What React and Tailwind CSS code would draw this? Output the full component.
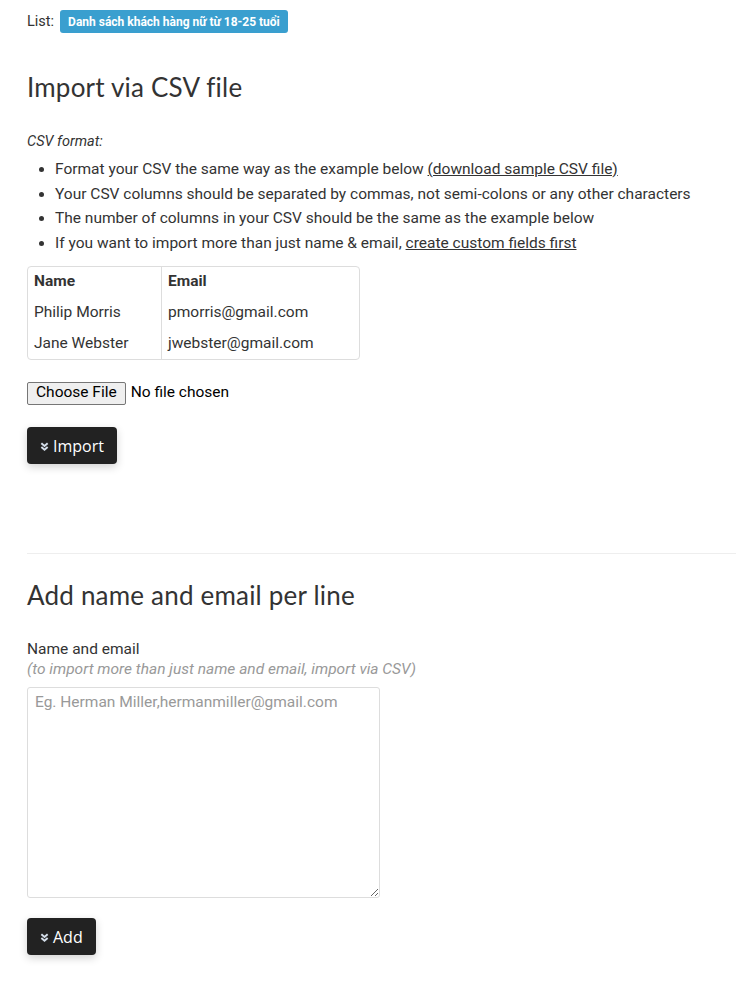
import React from 'react';

const DoubleChevron = () => (
  <svg width="9" height="9" viewBox="0 0 10 10" className="mr-[4px] mt-[1px]" fill="none" stroke="currentColor" strokeWidth="2.2">
    <path d="M1.5 1.5 L5 4.5 L8.5 1.5" />
    <path d="M1.5 5.5 L5 8.5 L8.5 5.5" />
  </svg>
);

const DarkButton = ({ children }) => (
  <button className="flex items-center h-[37px] px-[13px] bg-[#222222] text-white rounded-[4px] shadow-[0_3px_8px_rgba(0,0,0,0.18)] text-[16px] font-['Open_Sans',sans-serif]">
    <span className="text-[#d4deea]"><DoubleChevron /></span>
    {children}
  </button>
);

const heading = "text-[26px] text-[#333] font-['Lato',sans-serif] font-normal tracking-[0.2px]";

export default function App() {
  return (
    <div className="min-h-[989px] bg-white font-['Roboto',sans-serif] text-[#333] text-[15.5px] pl-[27px] overflow-hidden">
      {/* List badge */}
      <div className="flex items-center pt-[10px] h-[33px]">
        <span className="text-[14.5px] mr-[6px]">List:</span>
        <span className="bg-[#3a9fcf] text-white font-bold text-[12px] rounded-[3px] px-[8px] h-[23px] flex items-center">
          Danh sách khách hàng nữ từ 18-25 tuổi
        </span>
      </div>

      {/* CSV import */}
      <h2 className={`${heading} mt-[37px] leading-[34px]`}>Import via CSV file</h2>

      <p className="italic text-[14.5px] mt-[28px] leading-[20px]">CSV format:</p>
      <ul className="list-disc pl-[28px] mt-[5px] leading-[24.5px] marker:text-[#333]">
        <li>Format your CSV the same way as the example below <a className="underline">(download sample CSV file)</a></li>
        <li>Your CSV columns should be separated by commas, not semi-colons or any other characters</li>
        <li>The number of columns in your CSV should be the same as the example below</li>
        <li>If you want to import more than just name &amp; email, <a className="underline">create custom fields first</a></li>
      </ul>

      <table className="mt-[11px] w-[333px] border-separate border-spacing-0 border border-[#dddddd] rounded-[4px]">
        <thead>
          <tr>
            <th className="text-left font-bold h-[30px] pl-[6px] w-[134px] border-r border-[#dddddd]">Name</th>
            <th className="text-left font-bold h-[30px] pl-[6px]">Email</th>
          </tr>
        </thead>
        <tbody>
          <tr>
            <td className="h-[31px] pl-[6px] border-r border-[#dddddd]">Philip Morris</td>
            <td className="h-[31px] pl-[6px]">pmorris@gmail.com</td>
          </tr>
          <tr>
            <td className="h-[31px] pl-[6px] border-r border-[#dddddd]">Jane Webster</td>
            <td className="h-[31px] pl-[6px]">jwebster@gmail.com</td>
          </tr>
        </tbody>
      </table>

      <div className="flex items-center mt-[21px] h-[24px]">
        <span className="h-[23px] px-[8px] flex items-center bg-[#efefef] border border-[#767676] rounded-[2px] text-[15.5px] text-black">Choose File</span>
        <span className="ml-[5px] text-[15.5px] text-black">No file chosen</span>
      </div>

      <div className="mt-[22px]">
        <DarkButton>Import</DarkButton>
      </div>

      <hr className="mt-[89px] border-0 border-t border-[#eeeeee]" />

      <h2 className={`${heading} mt-[24px] leading-[34px]`}>Add name and email per line</h2>

      <div className="mt-[27px] leading-[20px]">Name and email</div>
      <div className="italic text-[#999999] leading-[20px]">(to import more than just name and email, import via CSV)</div>

      <textarea
        className="block mt-[8px] w-[353px] h-[211px] border border-[#dddddd] rounded-[3px] px-[7px] py-[3px] text-[15.5px] placeholder:text-[#999999] outline-none"
        placeholder="Eg. Herman Miller,hermanmiller@gmail.com"
      />

      <div className="mt-[20px]">
        <DarkButton>Add</DarkButton>
      </div>
    </div>
  );
}
